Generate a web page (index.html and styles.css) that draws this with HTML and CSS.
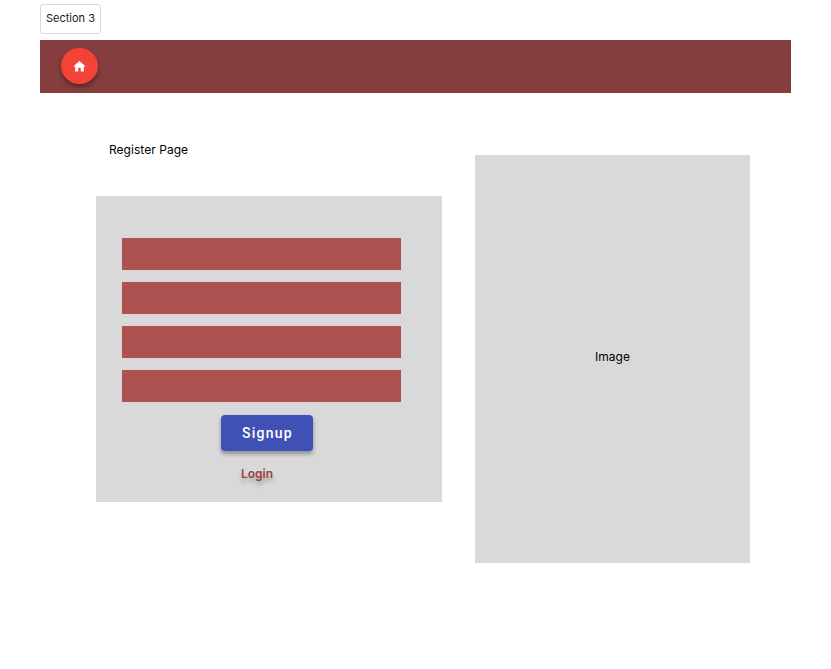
FILE: index.html
```html
<!DOCTYPE html>
<html lang="en">
<head>
<meta charset="utf-8">
<title>Register Page</title>
<link rel="stylesheet" href="styles.css">
</head>
<body>
<div class="section-label">Section 3</div>
<header class="topbar">
  <a class="home" href="#" aria-label="Home"><svg width="15" height="15" viewBox="0 0 24 24"><path fill="#fff" d="M10 20v-6h4v6h5v-8h3L12 3 2 12h3v8z"/></svg></a>
</header>
<main class="content">
  <section class="register">
    <h1 class="title">Register Page</h1>
    <form class="form">
      <div class="field"></div>
      <div class="field"></div>
      <div class="field"></div>
      <div class="field"></div>
      <button class="signup" type="button">Signup</button>
      <a class="login" href="#">Login</a>
    </form>
  </section>
  <aside class="image">Image</aside>
</main>
</body>
</html>
```
FILE: styles.css
```css
* { box-sizing: border-box; }
body {
  margin: 0;
  padding: 4px 40px 0;
  background: #fff;
  color: #000;
  font-family: Inter, sans-serif;
}
.section-label {
  width: 61px;
  height: 30px;
  border: 1px solid #d9d9d9;
  border-radius: 3px;
  color: #1a1a1a;
  font-size: 11px;
  line-height: 27px;
  text-align: center;
  white-space: nowrap;
}
.topbar {
  display: flex;
  height: 53px;
  margin-top: 6px;
  padding: 8px 21px;
  background: #853d3d;
}
.home {
  display: flex;
  align-items: center;
  justify-content: center;
  width: 37px;
  height: 36px;
  border-radius: 50%;
  background: #f44336;
  box-shadow: 0 3px 4px rgba(0, 0, 0, .35);
}
.content {
  display: flex;
  align-items: flex-start;
  gap: 33px;
  padding: 48px 0 0 56px;
}
.register { width: 346px; }
.title {
  margin: 0 0 38px 13px;
  font-size: 12px;
  font-weight: 400;
  letter-spacing: .04px;
  line-height: 17px;
}
.form {
  display: flex;
  flex-direction: column;
  gap: 12px;
  height: 306px;
  padding: 42px 26px 0;
  background: #d9d9d9;
}
.field {
  width: 279px;
  height: 32px;
  background: #ad5151;
}
.signup {
  width: 92px;
  height: 36px;
  margin: 1px 0 0 99px;
  padding: 0 0 0 1px;
  border: 0;
  border-radius: 4px;
  background: #3f51b5;
  box-shadow: 0 3px 4px rgba(0, 0, 0, .35);
  color: #fff;
  font: 500 14px/36px Roboto, sans-serif;
  letter-spacing: 1.25px;
}
.login {
  margin: 3px 0 0 119px;
  color: #984343;
  font-size: 12px;
  font-weight: 600;
  line-height: 16px;
  text-decoration: none;
  text-shadow: 0 4px 4px rgba(0, 0, 0, .25);
}
.image {
  display: flex;
  align-items: center;
  justify-content: center;
  width: 275px;
  height: 408px;
  margin-top: 14px;
  padding-bottom: 6px;
  background: #d9d9d9;
  font-size: 12px;
}
```
